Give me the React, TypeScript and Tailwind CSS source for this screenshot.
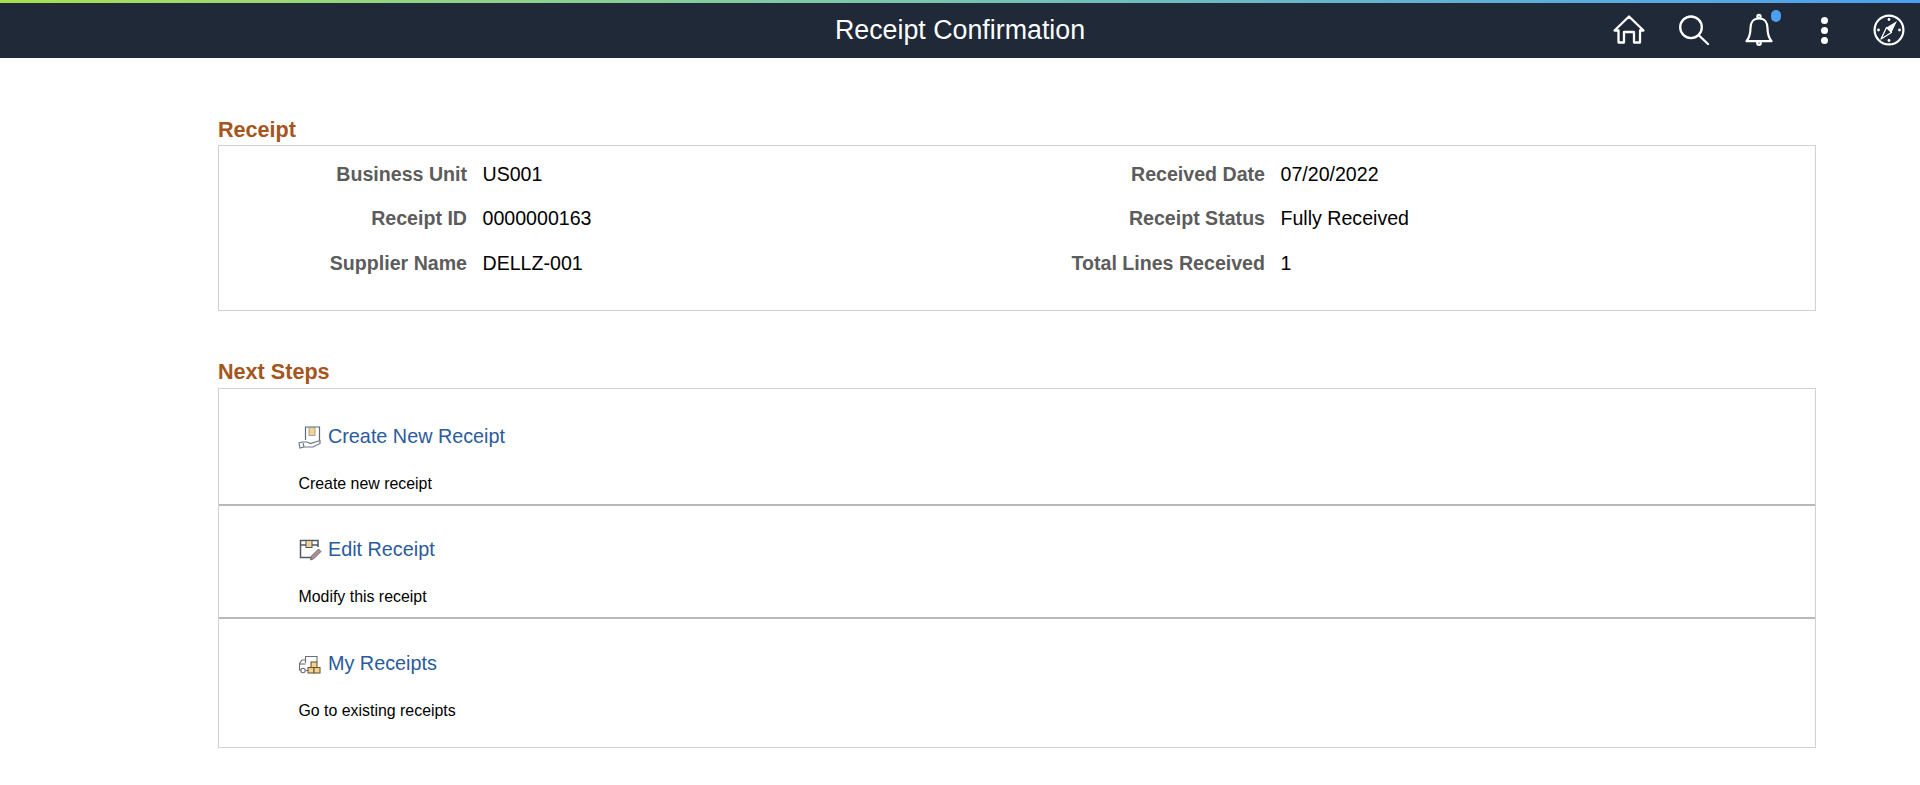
const RECEIPT_FIELDS = [
  { label: 'Business Unit', value: 'US001', label2: 'Received Date', value2: '07/20/2022' },
  { label: 'Receipt ID', value: '0000000163', label2: 'Receipt Status', value2: 'Fully Received' },
  { label: 'Supplier Name', value: 'DELLZ-001', label2: 'Total Lines Received', value2: '1' },
];

function Field({ label, value }: { label: string; value: string }) {
  return (
    <div className="flex items-center gap-[15.5px] h-[44.5px]">
      <div className="w-[248px] text-right text-[19.6px] font-bold text-[#5c5c5c]">{label}</div>
      <div className="text-[19.6px] text-black">{value}</div>
    </div>
  );
}

function HomeIcon() {
  return (
    <svg width="40" height="40" viewBox="0 0 40 40" fill="none" stroke="white" strokeWidth="2.3" strokeLinejoin="round" strokeLinecap="round">
      <path d="M9.5 20.5 H5.5 L20 6.5 L34.5 20.5 H31 V32.5 H25 V22 H15 V32.5 H9.5 Z" />
    </svg>
  );
}

function SearchIcon() {
  return (
    <svg width="40" height="40" viewBox="0 0 40 40" fill="none" stroke="white" strokeWidth="2.3" strokeLinecap="round">
      <circle cx="17" cy="17.3" r="10.8" />
      <path d="M25 25.5 L34 34" />
    </svg>
  );
}

function BellIcon() {
  return (
    <svg width="40" height="40" viewBox="0 0 40 40" fill="none" stroke="white" strokeWidth="2.2" strokeLinejoin="round">
      <circle cx="20" cy="6.5" r="1.6" />
      <path d="M20 8.5 C14 8.5 11.5 13 11.5 18 C11.5 24 10 28 7.5 31.2 H32.5 C30 28 28.5 24 28.5 18 C28.5 13 26 8.5 20 8.5 Z" />
      <circle cx="20" cy="33" r="1.8" />
    </svg>
  );
}

function CompassIcon() {
  return (
    <svg width="40" height="40" viewBox="0 0 40 40" fill="none" stroke="white" strokeWidth="2.2">
      <circle cx="20" cy="20" r="14.4" />
      <path d="M28 11 L22.5 22.5 L17.5 17.5 Z" fill="white" stroke="none" />
      <path d="M12 29 L17.5 17.5 L22.5 22.5 Z" fill="none" strokeWidth="1.3" strokeLinejoin="round" />
      <circle cx="20" cy="9.5" r="1.4" fill="white" stroke="none" />
      <circle cx="20" cy="30.5" r="1.4" fill="white" stroke="none" />
      <circle cx="9.5" cy="20" r="1.4" fill="white" stroke="none" />
      <circle cx="30.5" cy="20" r="1.4" fill="white" stroke="none" />
    </svg>
  );
}

function CreateIcon() {
  return (
    <svg width="24" height="24" viewBox="0 0 24 24" fill="none" stroke="#5f6b76" strokeWidth="1.2">
      <path d="M7.5 15 V2 H21.5 V15" />
      <rect x="11" y="2.5" width="6" height="8" fill="#f3d38d" stroke="#8a8f94" strokeWidth="0.8" />
      <path d="M4 17 H9 L12.5 18.5 L22 15.5 V18.5 L15 22 H6 L2 23 L1 18 Z" fill="#fff" stroke="#6e7a85" />
      <path d="M5 18 L6 22" stroke="#6e7a85" />
    </svg>
  );
}

function EditIcon() {
  return (
    <svg width="24" height="24" viewBox="0 0 24 24" fill="none" stroke="#4f5963" strokeWidth="1.5">
      <path d="M14 19.5 H2.5 V2.5 H20 V9" />
      <path d="M2.5 7 H20" />
      <rect x="8" y="2.5" width="6" height="7" fill="#f3d38d" stroke="#4f5963" strokeWidth="1" />
      <path d="M12.5 22 L13.5 18 L20.5 11 L23 13.5 L16 20.5 Z" fill="#a98f96" stroke="#7d6870" strokeWidth="1" />
    </svg>
  );
}

function ListIcon() {
  return (
    <svg width="24" height="24" viewBox="0 0 24 24" fill="none" stroke="#6a6f75" strokeWidth="1.1">
      <path d="M7.5 11 V4.5 H19 V10" />
      <path d="M7.5 8 H4 L1.5 11.5 V18 H3" />
      <path d="M1.5 12 H7.5" />
      <circle cx="5" cy="18.5" r="2.2" fill="#fff" />
      <path d="M7.5 18.5 H10" />
      <rect x="10" y="15.5" width="6" height="5.5" fill="#f3d38d" stroke="#6a5c3c" />
      <rect x="16" y="15.5" width="6" height="5.5" fill="#f3d38d" stroke="#6a5c3c" />
      <rect x="13" y="10" width="6" height="5.5" fill="#f3d38d" stroke="#6a5c3c" />
    </svg>
  );
}

const NEXT_STEPS = [
  { title: 'Create New Receipt', desc: 'Create new receipt', icon: <CreateIcon />, rowClass: 'h-[117px] pt-[33px] border-b-2 border-[#b9b9b9]' },
  { title: 'Edit Receipt', desc: 'Modify this receipt', icon: <EditIcon />, rowClass: 'h-[113px] pt-[29px] border-b-2 border-[#b9b9b9]' },
  { title: 'My Receipts', desc: 'Go to existing receipts', icon: <ListIcon />, rowClass: 'pt-[30px]' },
];

export default function App() {
  return (
    <div className="min-h-screen bg-white font-['Liberation_Sans',Arial,sans-serif]">
      {/* Banner */}
      <div className="h-[58px] bg-[#1f2937] relative">
        <div className="h-[3px] bg-gradient-to-r from-[#a8e04c] to-[#4c9ff0]" />
        <div className="h-[55px] flex items-center justify-center text-white text-[26.8px]">Receipt Confirmation</div>
        <div className="absolute top-[10px] right-[11px] flex items-center gap-[25px]">
          <HomeIcon />
          <SearchIcon />
          <div className="relative">
            <BellIcon />
            <span className="absolute top-0 left-[32px] w-[10px] h-[12px] rounded-full bg-[#4c9ff0]" />
          </div>
          <div className="w-[40px] flex flex-col items-center gap-[3px]">
            <span className="w-[7px] h-[7px] rounded-full bg-white" />
            <span className="w-[7px] h-[7px] rounded-full bg-white" />
            <span className="w-[7px] h-[7px] rounded-full bg-white" />
          </div>
          <CompassIcon />
        </div>
      </div>

      <div className="ml-[218px] w-[1598px]">
        {/* Receipt */}
        <h2 className="mt-[60px] h-[27px] leading-[24px] text-[21.6px] font-bold text-[#a5561c]">Receipt</h2>
        <div className="border border-[#d0d3d6] h-[166px] pt-[6px] grid grid-cols-2 content-start">
          {RECEIPT_FIELDS.map((f) => [
            <Field key={f.label} label={f.label} value={f.value} />,
            <Field key={f.label2} label={f.label2} value={f.value2} />,
          ])}
        </div>

        {/* Next Steps */}
        <h2 className="mt-[48px] h-[29px] leading-[26px] text-[21.6px] font-bold text-[#a5561c]">Next Steps</h2>
        <div className="border border-[#d0d3d6] h-[360px]">
          {NEXT_STEPS.map((s) => (
            <div key={s.title} className={`pl-[79px] ${s.rowClass}`}>
              <div className="flex items-center gap-[6px] h-[30px]">
                {s.icon}
                <a className="text-[19.8px] text-[#2a5b9c]">{s.title}</a>
              </div>
              <p className="mt-[22px] pl-[0.5px] text-[15.9px] text-black leading-[20px]">{s.desc}</p>
            </div>
          ))}
        </div>
      </div>
    </div>
  );
}
